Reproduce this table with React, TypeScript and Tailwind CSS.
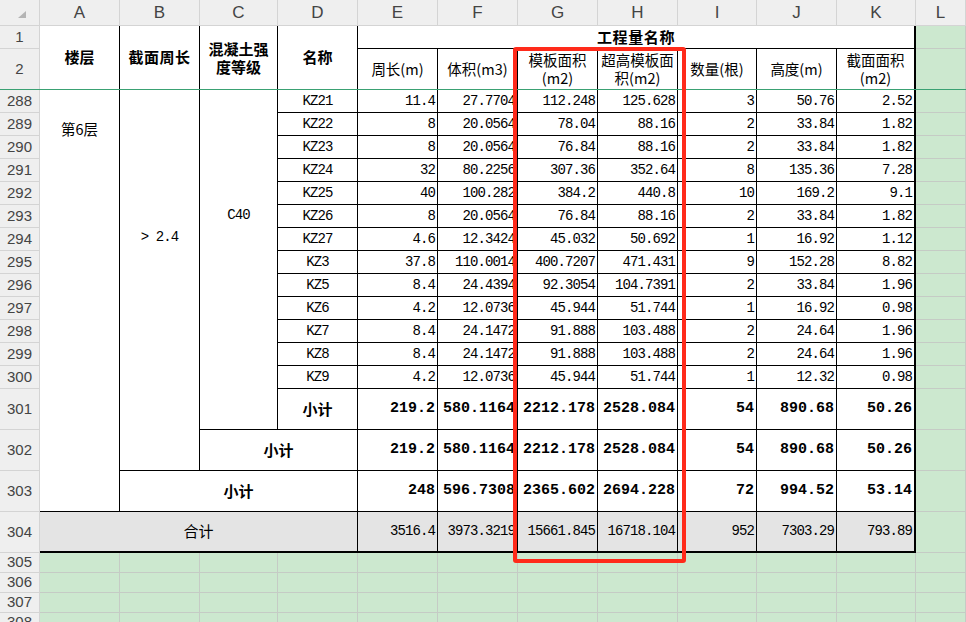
import React from "react";

const cols = ["A", "B", "C", "D", "E", "F", "G", "H", "I", "J", "K", "L"];

const rows: string[][] = [
  ["KZ21", "11.4", "27.7704", "112.248", "125.628", "3", "50.76", "2.52"],
  ["KZ22", "8", "20.0564", "78.04", "88.16", "2", "33.84", "1.82"],
  ["KZ23", "8", "20.0564", "76.84", "88.16", "2", "33.84", "1.82"],
  ["KZ24", "32", "80.2256", "307.36", "352.64", "8", "135.36", "7.28"],
  ["KZ25", "40", "100.282", "384.2", "440.8", "10", "169.2", "9.1"],
  ["KZ26", "8", "20.0564", "76.84", "88.16", "2", "33.84", "1.82"],
  ["KZ27", "4.6", "12.3424", "45.032", "50.692", "1", "16.92", "1.12"],
  ["KZ3", "37.8", "110.0014", "400.7207", "471.431", "9", "152.28", "8.82"],
  ["KZ5", "8.4", "24.4394", "92.3054", "104.7391", "2", "33.84", "1.96"],
  ["KZ6", "4.2", "12.0736", "45.944", "51.744", "1", "16.92", "0.98"],
  ["KZ7", "8.4", "24.1472", "91.888", "103.488", "2", "24.64", "1.96"],
  ["KZ8", "8.4", "24.1472", "91.888", "103.488", "2", "24.64", "1.96"],
  ["KZ9", "4.2", "12.0736", "45.944", "51.744", "1", "12.32", "0.98"],
];

const sub1 = ["219.2", "580.1164", "2212.178", "2528.084", "54", "890.68", "50.26"];
const sub3 = ["248", "596.7308", "2365.602", "2694.228", "72", "994.52", "53.14"];
const total = ["3516.4", "3973.3219", "15661.845", "16718.104", "952", "7303.29", "793.89"];

const heads: string[][] = [
  ["周长(m)"],
  ["体积(m3)"],
  ["模板面积", "(m2)"],
  ["超高模板面", "积(m2)"],
  ["数量(根)"],
  ["高度(m)"],
  ["截面面积", "(m2)"],
];

const hdr =
  "bg-[#efefef] border-r border-b border-[#d4d4d4] text-[#444] font-['Liberation_Sans',Arial,sans-serif] flex items-center justify-center";
const green = "bg-[#cce8cf] border-r border-b border-[#c5cbc5]";
const cell = "bg-white border-b border-black overflow-hidden whitespace-nowrap flex items-center";
const cjk = "font-['Noto_Sans_CJK_SC',sans-serif]";
const mono = "font-['Liberation_Mono','Noto_Sans_CJK_SC',monospace]";

const numCls = (i: number) =>
  i === 6
    ? `${cell} border-r-2 justify-end pr-[2px] ${mono} text-[14px] tracking-[-0.9px]`
    : `${cell} border-r justify-end pr-[2px] ${mono} text-[14px] tracking-[-0.9px]`;

const boldCls = (i: number) =>
  i === 6
    ? `${cell} border-r-2 justify-end pr-[2px] ${mono} text-[15px] font-bold`
    : `${cell} border-r justify-end pr-[2px] ${mono} text-[15px] font-bold`;

const totalCls = (i: number) =>
  i === 6
    ? `${cell} !bg-[#e4e4e4] border-r-2 !border-b-2 justify-end pr-[2px] ${mono} text-[14px] tracking-[-0.9px]`
    : `${cell} !bg-[#e4e4e4] border-r !border-b-2 justify-end pr-[2px] ${mono} text-[14px] tracking-[-0.9px]`;

const RowHead = ({ n }: { n: string | number }) => (
  <div className={`${hdr} text-[15px]`}>{n}</div>
);

export default function App() {
  return (
    <div className="relative h-[622px] w-[966px] overflow-hidden bg-[#cce8cf]">
      <div className="grid grid-cols-[40px_80px_80px_78px_80px_80px_80px_80px_80px_79px_80px_79px_1fr] grid-rows-[26px_23px_41px_repeat(13,23px)_41px_41px_41px_41px_20px_20px_20px_20px]">
        {/* column letters */}
        <div className={`${hdr} relative`}>
          <svg className="absolute left-[18px] top-[11px]" width="8" height="7" viewBox="0 0 8 7">
            <polygon points="8,0 8,7 0,7" fill="#b4b4b4" />
          </svg>
        </div>
        {cols.map((c) => (
          <div key={c} className={`${hdr} text-[17px]`}>
            {c}
          </div>
        ))}

        {/* row 1 */}
        <RowHead n={1} />
        <div className={`${cell} border-r row-span-2 justify-center ${cjk} text-[15px] font-bold`}>楼层</div>
        <div className={`${cell} border-r row-span-2 justify-center ${cjk} text-[15px] font-bold tracking-[0.5px]`}>截面周长</div>
        <div className={`${cell} border-r row-span-2 justify-center ${cjk} text-[15px] font-bold text-center`}>
          <div>
            <div className="h-[18px] leading-[18px]">混凝土强</div>
            <div className="h-[18px] leading-[18px]">度等级</div>
          </div>
        </div>
        <div className={`${cell} border-r row-span-2 justify-center ${cjk} text-[15px] font-bold`}>名称</div>
        <div className={`${cell} border-r-2 col-span-7 justify-center ${cjk} text-[15px] font-bold tracking-[0.6px]`}>
          工程量名称
        </div>
        <div className={green} />

        {/* row 2 */}
        <RowHead n={2} />
        {heads.map((h, i) => (
          <div
            key={i}
            className={
              i === 6
                ? `${cell} border-r-2 justify-center ${cjk} text-[14.5px] text-center`
                : `${cell} border-r justify-center ${cjk} text-[14.5px] text-center`
            }
          >
            <div>
              {h.map((l, j) => (
                <div key={j} className="h-[18px] leading-[18px]">
                  {l}
                </div>
              ))}
            </div>
          </div>
        ))}
        <div className={green} />

        {/* rows 288 - 300 */}
        {rows.map((r, ri) => (
          <React.Fragment key={r[0]}>
            <RowHead n={288 + ri} />
            {ri === 0 && (
              <>
                <div className={`${cell} border-r row-span-16 !items-start justify-center pt-[28px] leading-[22px] ${cjk} text-[14.5px]`}>
                  第6层
                </div>
                <div className={`${cell} border-r row-span-15 !items-start justify-center pt-[136px] leading-[22px] ${mono} text-[14px] tracking-[-0.9px]`}>
                  &gt; 2.4
                </div>
                <div className={`${cell} border-r row-span-14 !items-start justify-center pt-[114px] leading-[22px] ${mono} text-[14px] tracking-[-0.9px]`}>
                  C40
                </div>
              </>
            )}
            <div className={`${cell} border-r justify-center ${mono} text-[14px] tracking-[-0.9px]`}>{r[0]}</div>
            {r.slice(1).map((v, i) => (
              <div key={i} className={numCls(i)}>
                {v}
              </div>
            ))}
            <div className={green} />
          </React.Fragment>
        ))}

        {/* 301 */}
        <RowHead n={301} />
        <div className={`${cell} border-r justify-center ${cjk} text-[15px] font-bold`}>小计</div>
        {sub1.map((v, i) => (
          <div key={i} className={boldCls(i)}>
            {v}
          </div>
        ))}
        <div className={green} />

        {/* 302 */}
        <RowHead n={302} />
        <div className={`${cell} border-r col-span-2 justify-center ${cjk} text-[15px] font-bold`}>小计</div>
        {sub1.map((v, i) => (
          <div key={i} className={boldCls(i)}>
            {v}
          </div>
        ))}
        <div className={green} />

        {/* 303 */}
        <RowHead n={303} />
        <div className={`${cell} border-r col-span-3 justify-center ${cjk} text-[15px] font-bold`}>小计</div>
        {sub3.map((v, i) => (
          <div key={i} className={boldCls(i)}>
            {v}
          </div>
        ))}
        <div className={green} />

        {/* 304 */}
        <RowHead n={304} />
        <div className={`${cell} !bg-[#e4e4e4] border-r !border-b-2 col-span-4 justify-center ${cjk} text-[15px]`}>合计</div>
        {total.map((v, i) => (
          <div key={i} className={totalCls(i)}>
            {v}
          </div>
        ))}
        <div className={green} />

        {/* empty rows */}
        {[305, 306, 307, 308].map((n) => (
          <React.Fragment key={n}>
            <RowHead n={n} />
            {cols.map((c) => (
              <div key={c} className={green} />
            ))}
          </React.Fragment>
        ))}
      </div>

      {/* frozen pane line */}
      <div className="absolute left-0 right-0 top-[89px] h-px bg-[#3aa173]" />

      {/* highlight box */}
      <div className="absolute left-[513px] top-[47px] h-[516px] w-[173px] rounded-[3px] border-4 border-[#ff2a1a]" />
    </div>
  );
}
